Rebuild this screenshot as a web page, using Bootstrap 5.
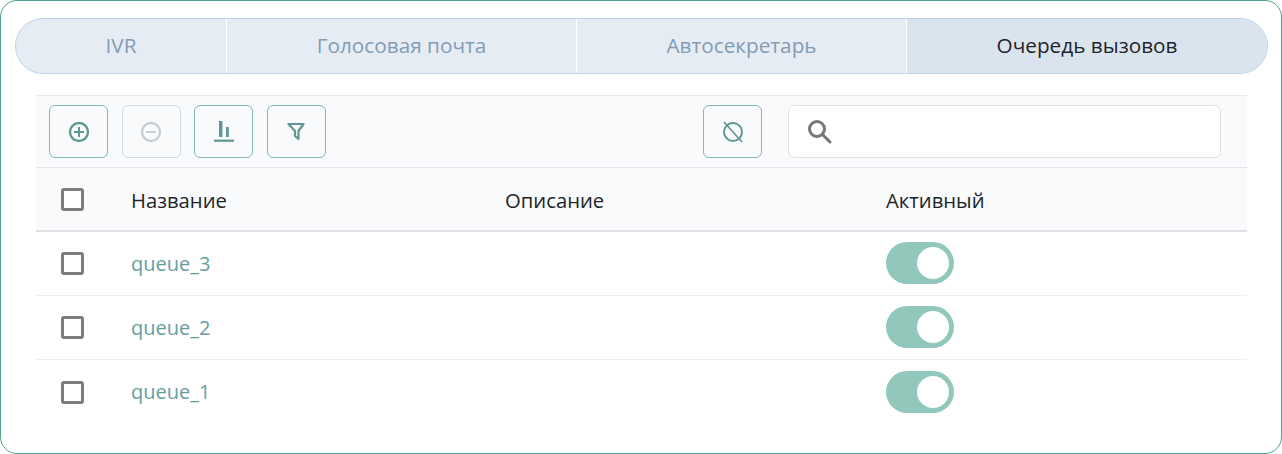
<!DOCTYPE html>
<html lang="ru">
<head>
<meta charset="utf-8">
<title>Очередь вызовов</title>
<link href="https://cdn.jsdelivr.net/npm/bootstrap@5.3.0/dist/css/bootstrap.min.css" rel="stylesheet">
<style>
html,body{height:100%;}
body{font-family:"Open Sans",sans-serif;background:#fff;font-size:20px;}
.shell{height:454px;border:1px solid #4aa392;border-radius:17px;padding:17px 13px 0 14px;}
.tabbar{height:56px;border:1px solid #c0d3e6;border-radius:28px;overflow:hidden;background:#e6ecf4;}
.tabitem{height:100%;display:flex;align-items:center;justify-content:center;color:#829cb4;font-size:20.75px;text-decoration:none;border-right:1.5px solid #fff;}
.tabitem:last-child{border-right:0;}
.tabitem.on{background:#dae4ef;color:#212529;}
.t1{width:211px;}.t2{width:350px;}.t3{width:330px;}.t4{flex:1;}
.panel{margin:21px 21px 0 21px;}
.tools{height:73px;background:#f9fafc;border-top:1px solid #e7e9ec;border-bottom:1px solid #e3e5e8;padding:9px 26px 0 13px;}
.toolbtn{width:59px;height:53px;padding:0;border:1px solid #85b8b3;border-radius:6px;background:transparent;display:flex;align-items:center;justify-content:center;color:#5f9793;}
.toolbtn.off{border-color:#d6dadd;color:#c9cdd1;}
.gap13{gap:13.67px;}
.searchbox{width:433px;height:53px;margin-left:26px;background:#fff;border:1px solid #dfe2e6;border-radius:6px;display:flex;align-items:center;padding-left:18px;}
.gridrow{display:grid;grid-template-columns:95px 374px 381px 1fr;align-items:center;height:64px;border-bottom:1px solid #eceef0;}
.gridrow.head{height:64px;background:#f9fafc;border-bottom:2px solid #dfe1e4;color:#212529;font-size:20.25px;}
.headlabel{padding-top:2px;}
.tick{width:23px;height:23px;border:3px solid #7c7c7c;border-radius:3px;background:#fff;margin-left:25px;}
.qlink{color:#659e9f;text-decoration:none;font-size:20px;}
.pill{width:68px;height:42px;border-radius:21px;background:#92c8bc;display:flex;align-items:center;justify-content:flex-end;padding-right:5px;margin-top:-1px;}
.pill span{width:32px;height:32px;border-radius:50%;background:#fff;display:block;}
</style>
</head>
<body>
<div class="shell">
  <nav class="tabbar d-flex">
    <a href="#" class="tabitem t1">IVR</a>
    <a href="#" class="tabitem t2">Голосовая почта</a>
    <a href="#" class="tabitem t3">Автосекретарь</a>
    <a href="#" class="tabitem t4 on">Очередь вызовов</a>
  </nav>
  <div class="panel">
    <div class="tools d-flex">
      <div class="d-flex gap13">
        <button type="button" class="toolbtn" aria-label="add"><svg width="22" height="22" viewBox="0 0 22 22" fill="none" stroke="currentColor" stroke-width="2.3"><circle cx="11" cy="11" r="9"/><path d="M11 6v10M6 11h10" stroke-width="2"/></svg></button>
        <button type="button" class="toolbtn off" aria-label="remove"><svg width="22" height="22" viewBox="0 0 22 22" fill="none" stroke="currentColor" stroke-width="2.3"><circle cx="11" cy="11" r="9"/><path d="M6 11h10" stroke-width="2"/></svg></button>
        <button type="button" class="toolbtn" aria-label="chart"><svg width="22" height="22" viewBox="0 0 22 22" fill="currentColor"><rect x="6" y="0" width="3.4" height="16"/><rect x="13" y="6" width="2.8" height="10"/><rect x="1" y="18.6" width="20" height="2.2"/></svg></button>
        <button type="button" class="toolbtn" aria-label="filter"><svg width="18" height="19" viewBox="0 0 18 19" fill="none" stroke="currentColor" stroke-width="2.2" stroke-linejoin="round"><path d="M1.500 2h15l-5 7v8L8 14V9z"/></svg></button>
      </div>
      <button type="button" class="toolbtn ms-auto" aria-label="reset"><svg width="24" height="24" viewBox="0 0 24 24" fill="none" stroke="currentColor" stroke-width="2"><circle cx="12" cy="12" r="9"/><path d="M3 2 21 22" stroke-width="1.7"/></svg></button>
      <div class="searchbox"><svg width="26" height="26" viewBox="0 0 26 26" fill="none" stroke="#777" stroke-width="3"><circle cx="10" cy="10" r="7.500"/><path d="M15.500 15.500 23 23" stroke-linecap="round"/></svg></div>
    </div>
    <div class="gridrow head">
      <div><div class="tick"></div></div>
      <div class="headlabel">Название</div>
      <div class="headlabel">Описание</div>
      <div class="headlabel">Активный</div>
    </div>
    <div class="gridrow">
      <div><div class="tick"></div></div>
      <div><a href="#" class="qlink">queue_3</a></div>
      <div></div>
      <div><div class="pill"><span></span></div></div>
    </div>
    <div class="gridrow">
      <div><div class="tick"></div></div>
      <div><a href="#" class="qlink">queue_2</a></div>
      <div></div>
      <div><div class="pill"><span></span></div></div>
    </div>
    <div class="gridrow border-0">
      <div><div class="tick"></div></div>
      <div><a href="#" class="qlink">queue_1</a></div>
      <div></div>
      <div><div class="pill"><span></span></div></div>
    </div>
  </div>
</div>
<script src="https://cdn.jsdelivr.net/npm/bootstrap@5.3.0/dist/js/bootstrap.bundle.min.js"></script>
</body>
</html>
